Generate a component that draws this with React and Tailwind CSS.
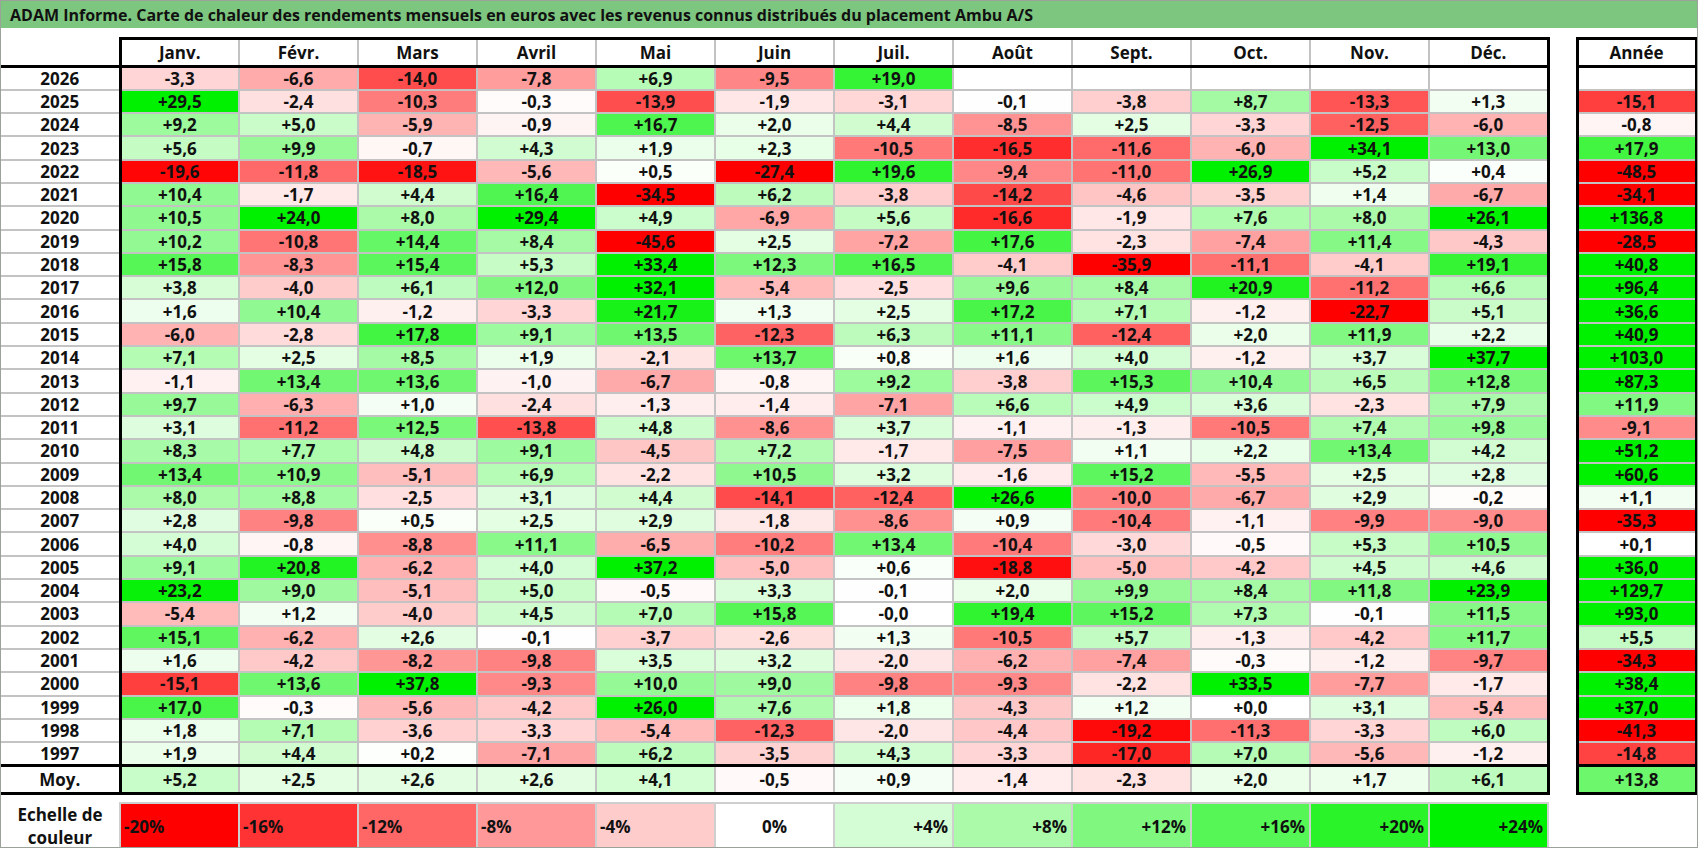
import React from "react";

const MONTHS = ["Janv.", "Févr.", "Mars", "Avril", "Mai", "Juin", "Juil.", "Août", "Sept.", "Oct.", "Nov.", "Déc."];

// année, 12 mois, total de l'année
const ROWS = [
  ["2026", "-3,3 -6,6 -14,0 -7,8 +6,9 -9,5 +19,0", ""],
  ["2025", "+29,5 -2,4 -10,3 -0,3 -13,9 -1,9 -3,1 -0,1 -3,8 +8,7 -13,3 +1,3", "-15,1"],
  ["2024", "+9,2 +5,0 -5,9 -0,9 +16,7 +2,0 +4,4 -8,5 +2,5 -3,3 -12,5 -6,0", "-0,8"],
  ["2023", "+5,6 +9,9 -0,7 +4,3 +1,9 +2,3 -10,5 -16,5 -11,6 -6,0 +34,1 +13,0", "+17,9"],
  ["2022", "-19,6 -11,8 -18,5 -5,6 +0,5 -27,4 +19,6 -9,4 -11,0 +26,9 +5,2 +0,4", "-48,5"],
  ["2021", "+10,4 -1,7 +4,4 +16,4 -34,5 +6,2 -3,8 -14,2 -4,6 -3,5 +1,4 -6,7", "-34,1"],
  ["2020", "+10,5 +24,0 +8,0 +29,4 +4,9 -6,9 +5,6 -16,6 -1,9 +7,6 +8,0 +26,1", "+136,8"],
  ["2019", "+10,2 -10,8 +14,4 +8,4 -45,6 +2,5 -7,2 +17,6 -2,3 -7,4 +11,4 -4,3", "-28,5"],
  ["2018", "+15,8 -8,3 +15,4 +5,3 +33,4 +12,3 +16,5 -4,1 -35,9 -11,1 -4,1 +19,1", "+40,8"],
  ["2017", "+3,8 -4,0 +6,1 +12,0 +32,1 -5,4 -2,5 +9,6 +8,4 +20,9 -11,2 +6,6", "+96,4"],
  ["2016", "+1,6 +10,4 -1,2 -3,3 +21,7 +1,3 +2,5 +17,2 +7,1 -1,2 -22,7 +5,1", "+36,6"],
  ["2015", "-6,0 -2,8 +17,8 +9,1 +13,5 -12,3 +6,3 +11,1 -12,4 +2,0 +11,9 +2,2", "+40,9"],
  ["2014", "+7,1 +2,5 +8,5 +1,9 -2,1 +13,7 +0,8 +1,6 +4,0 -1,2 +3,7 +37,7", "+103,0"],
  ["2013", "-1,1 +13,4 +13,6 -1,0 -6,7 -0,8 +9,2 -3,8 +15,3 +10,4 +6,5 +12,8", "+87,3"],
  ["2012", "+9,7 -6,3 +1,0 -2,4 -1,3 -1,4 -7,1 +6,6 +4,9 +3,6 -2,3 +7,9", "+11,9"],
  ["2011", "+3,1 -11,2 +12,5 -13,8 +4,8 -8,6 +3,7 -1,1 -1,3 -10,5 +7,4 +9,8", "-9,1"],
  ["2010", "+8,3 +7,7 +4,8 +9,1 -4,5 +7,2 -1,7 -7,5 +1,1 +2,2 +13,4 +4,2", "+51,2"],
  ["2009", "+13,4 +10,9 -5,1 +6,9 -2,2 +10,5 +3,2 -1,6 +15,2 -5,5 +2,5 +2,8", "+60,6"],
  ["2008", "+8,0 +8,8 -2,5 +3,1 +4,4 -14,1 -12,4 +26,6 -10,0 -6,7 +2,9 -0,2", "+1,1"],
  ["2007", "+2,8 -9,8 +0,5 +2,5 +2,9 -1,8 -8,6 +0,9 -10,4 -1,1 -9,9 -9,0", "-35,3"],
  ["2006", "+4,0 -0,8 -8,8 +11,1 -6,5 -10,2 +13,4 -10,4 -3,0 -0,5 +5,3 +10,5", "+0,1"],
  ["2005", "+9,1 +20,8 -6,2 +4,0 +37,2 -5,0 +0,6 -18,8 -5,0 -4,2 +4,5 +4,6", "+36,0"],
  ["2004", "+23,2 +9,0 -5,1 +5,0 -0,5 +3,3 -0,1 +2,0 +9,9 +8,4 +11,8 +23,9", "+129,7"],
  ["2003", "-5,4 +1,2 -4,0 +4,5 +7,0 +15,8 -0,0 +19,4 +15,2 +7,3 -0,1 +11,5", "+93,0"],
  ["2002", "+15,1 -6,2 +2,6 -0,1 -3,7 -2,6 +1,3 -10,5 +5,7 -1,3 -4,2 +11,7", "+5,5"],
  ["2001", "+1,6 -4,2 -8,2 -9,8 +3,5 +3,2 -2,0 -6,2 -7,4 -0,3 -1,2 -9,7", "-34,3"],
  ["2000", "-15,1 +13,6 +37,8 -9,3 +10,0 +9,0 -9,8 -9,3 -2,2 +33,5 -7,7 -1,7", "+38,4"],
  ["1999", "+17,0 -0,3 -5,6 -4,2 +26,0 +7,6 +1,8 -4,3 +1,2 +0,0 +3,1 -5,4", "+37,0"],
  ["1998", "+1,8 +7,1 -3,6 -3,3 -5,4 -12,3 -2,0 -4,4 -19,2 -11,3 -3,3 +6,0", "-41,3"],
  ["1997", "+1,9 +4,4 +0,2 -7,1 +6,2 -3,5 +4,3 -3,3 -17,0 +7,0 -5,6 -1,2", "-14,8"],
];

const AVG = ["+5,2 +2,5 +2,6 +2,6 +4,1 -0,5 +0,9 -1,4 -2,3 +2,0 +1,7 +6,1", "+13,8"];

const SCALE = [-20, -16, -12, -8, -4, 0, 4, 8, 12, 16, 20, 24];

function toNum(s) {
  if (!s) return null;
  return parseFloat(s.replace(",", "."));
}

function heat(s) {
  const v = toNum(s);
  if (v === null || Number.isNaN(v)) return "#ffffff";
  if (v < 0) {
    const t = Math.min(-v / 20, 1);
    const c = Math.round(255 * (1 - t));
    return `rgb(255,${c},${c})`;
  }
  const t = Math.min(v / 24, 1);
  const c = Math.round(255 * (1 - t));
  return `rgb(${c},${Math.round(255 - 14 * t)},${c})`;
}

function splitRow(str) {
  const vals = str.split(" ").filter(Boolean);
  while (vals.length < 12) vals.push("");
  return vals;
}

function monthCell(i, last) {
  if (i === 11) {
    return last
      ? "border-2 border-[#c3c3c3] border-r-[3px] border-r-black border-b-[3px] border-b-black"
      : "border-2 border-[#c3c3c3] border-r-[3px] border-r-black";
  }
  return last ? "border-2 border-[#c3c3c3] border-b-[3px] border-b-black" : "border-2 border-[#c3c3c3]";
}

export default function App() {
  return (
    <div className="w-[1698px] h-[848px] overflow-hidden bg-white border border-[#9aa29a] font-['Open_Sans',sans-serif] font-bold text-[#111] text-[17px]">
      <div className="h-[27px] bg-[#7dc67f] pl-[9px] flex items-center text-[16px] leading-none">
        ADAM Informe. Carte de chaleur des rendements mensuels en euros avec les revenus connus distribués du placement Ambu A/S
      </div>

      <table className="mt-[9px] table-fixed w-[1695px] text-center leading-none">
        <colgroup>
          <col className="w-[119px]" />
          {MONTHS.map((m) => (
            <col key={m} className="w-[119px]" />
          ))}
          <col className="w-[29px]" />
          <col className="w-[119px]" />
        </colgroup>
        <tbody>
          <tr className="h-[28px]">
            <td className="border-b-[3px] border-r-[3px] border-black" />
            {MONTHS.map((m, i) => (
              <td
                key={m}
                className={
                  i === 11
                    ? "border-y-[3px] border-y-black border-l-2 border-l-[#c3c3c3] border-r-[3px] border-r-black"
                    : "border-y-[3px] border-y-black border-x-2 border-x-[#c3c3c3]"
                }
              >
                {m}
              </td>
            ))}
            <td />
            <td className="border-[3px] border-black">Année</td>
          </tr>

          {ROWS.map(([year, months, total], r) => {
            const last = r === ROWS.length - 1;
            return (
              <tr key={year} className="h-[23.3px]">
                <td
                  className={
                    last
                      ? "border-r-[3px] border-r-black border-b-[3px] border-b-black"
                      : "border-r-[3px] border-r-black border-b-2 border-b-[#c3c3c3]"
                  }
                >
                  {year}
                </td>
                {splitRow(months).map((v, i) => (
                  <td key={i} className={monthCell(i, last)} style={{ backgroundColor: heat(v) }}>
                    {v}
                  </td>
                ))}
                <td />
                <td
                  className={
                    last
                      ? "border-x-[3px] border-x-black border-t-2 border-t-[#c3c3c3] border-b-[3px] border-b-black"
                      : "border-x-[3px] border-x-black border-y-2 border-y-[#c3c3c3]"
                  }
                  style={{ backgroundColor: heat(total) }}
                >
                  {total}
                </td>
              </tr>
            );
          })}

          <tr className="h-[28px]">
            <td className="border-r-[3px] border-b-[3px] border-black">Moy.</td>
            {splitRow(AVG[0]).map((v, i) => (
              <td key={i} className={monthCell(i, true)} style={{ backgroundColor: heat(v) }}>
                {v}
              </td>
            ))}
            <td />
            <td className="border-[3px] border-black" style={{ backgroundColor: heat(AVG[1]) }}>
              {AVG[1]}
            </td>
          </tr>

          <tr className="h-[10px]">
            <td colSpan={15} />
          </tr>

          <tr className="h-[43px]">
            <td className="leading-[23px]">
              Echelle de
              <br />
              couleur
            </td>
            {SCALE.map((p) => (
              <td
                key={p}
                className={
                  p < 0
                    ? "border-2 border-[#cfcfcf] text-left pl-[3px]"
                    : p === 0
                      ? "border-2 border-[#cfcfcf] text-center"
                      : "border-2 border-[#cfcfcf] text-right pr-[4px]"
                }
                style={{ backgroundColor: heat(String(p)) }}
              >
                {p > 0 ? `+${p}%` : `${p}%`}
              </td>
            ))}
            <td />
            <td />
          </tr>
        </tbody>
      </table>
    </div>
  );
}
